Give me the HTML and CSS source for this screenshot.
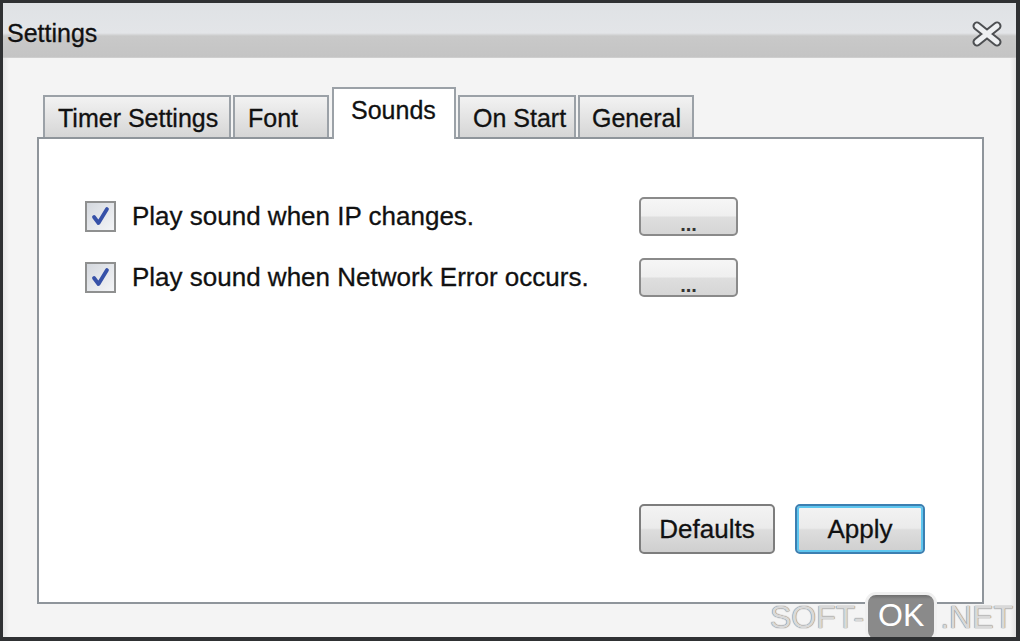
FILE: index.html
```html
<!DOCTYPE html>
<html>
<head>
<meta charset="utf-8">
<link rel="stylesheet" href="styles.css">
</head>
<body>
<div class="window">
  <div class="titlebar">
    <span class="title">Settings</span>
    <svg class="close" width="32" height="26" viewBox="0 0 32 26">
      <path d="M6 5 L26 21 M26 5 L6 21" stroke="#4d4f52" stroke-width="9" stroke-linecap="round"/>
      <path d="M6 5 L26 21 M26 5 L6 21" stroke="#eef0f2" stroke-width="5" stroke-linecap="round"/>
    </svg>
  </div>
  <div class="content">
    <div class="tabs">
      <div class="tab t1">Timer Settings</div>
      <div class="tab t2">Font</div>
      <div class="tab t3 active">Sounds</div>
      <div class="tab t4">On Start</div>
      <div class="tab t5">General</div>
    </div>
    <div class="panel">
      <div class="row">
        <span class="check"><svg width="27" height="27" viewBox="0 0 27 27"><path d="M7 14 L11.5 20 L20 6" fill="none" stroke="#3651a8" stroke-width="3.8" stroke-linejoin="round" stroke-linecap="round"/></svg></span>
        <span class="label">Play sound when IP changes.</span>
        <button class="dots">...</button>
      </div>
      <div class="row">
        <span class="check"><svg width="27" height="27" viewBox="0 0 27 27"><path d="M7 14 L11.5 20 L20 6" fill="none" stroke="#3651a8" stroke-width="3.8" stroke-linejoin="round" stroke-linecap="round"/></svg></span>
        <span class="label">Play sound when Network Error occurs.</span>
        <button class="dots">...</button>
      </div>
      <div class="footer">
        <button class="btn defaults">Defaults</button>
        <button class="btn apply">Apply</button>
      </div>
    </div>
  </div>
  <div class="watermark"><span class="wm-text">SOFT-</span><span class="wm-ok">OK</span><span class="wm-text">.NET</span></div>
</div>
</body>
</html>
```
FILE: styles.css
```css
html, body {
  margin: 0;
  padding: 0;
  background: #c8c8c8;
}
body {
  font-family: "Liberation Sans", Arial, sans-serif;
  color: #111;
}
.window {
  position: relative;
  box-sizing: border-box;
  width: 1020px;
  height: 641px;
  border: 3px solid #2f3133;
  border-right-width: 4px;
  border-bottom-width: 4px;
  background: #f1f1f1;
  display: flex;
  flex-direction: column;
  overflow: hidden;
}
.titlebar {
  height: 55px;
  flex: none;
  display: flex;
  align-items: center;
  justify-content: space-between;
  padding: 0 13px 0 4px;
  background: linear-gradient(#dfe2e5 0, #e3e5e8 30px, #c9c9c9 33px, #c4c4c4 54px, #d8d8d8 55px);
}
.title {
  font-size: 25px;
  color: #111;
  margin-top: 6px;
  -webkit-text-stroke: 0.3px #111;
}
.close {
  margin-top: 7px;
}
.content {
  flex: 1;
  display: flex;
  flex-direction: column;
  padding: 29px 32px 33px 34px;
  background: linear-gradient(90deg, #e6e6e6 0, #f4f4f4 6px, #f4f4f4 calc(100% - 6px), #e2e2e2 100%);
}
.tabs {
  height: 50px;
  flex: none;
  display: flex;
  align-items: flex-end;
  padding-left: 6px;
}
.tab {
  box-sizing: border-box;
  height: 42px;
  border: 2px solid #9ba1a7;
  border-bottom: none;
  background: linear-gradient(#f2f2f2, #e4e4e4 50%, #d6d6d6);
  font-size: 25px;
  display: flex;
  align-items: center;
  padding-left: 13px;
  padding-top: 2px;
  margin-right: 2px;
  -webkit-text-stroke: 0.3px #111;
}
.t1 { width: 188px; }
.t2 { width: 96px; margin-right: 3px; }
.t3 { width: 124px; }
.t4 { width: 118px; }
.t5 { width: 116px; padding-left: 12px; }
.tab.active {
  height: 52px;
  margin-bottom: -2px;
  position: relative;
  z-index: 1;
  background: #fff;
  padding-left: 17px;
  padding-top: 0;
  padding-bottom: 8px;
}
.panel {
  flex: 1;
  box-sizing: border-box;
  border: 2px solid #8f959b;
  background: #fff;
  display: flex;
  flex-direction: column;
  padding: 58px 0 48px 46px;
}
.row {
  display: flex;
  align-items: center;
  height: 39px;
  margin-bottom: 22px;
}
.check {
  box-sizing: border-box;
  width: 31px;
  height: 31px;
  border: 2px solid #8f9090;
  background: linear-gradient(135deg, #d4d8de, #f4f5f7);
  display: flex;
  align-items: center;
  justify-content: center;
  flex: none;
}
.label {
  font-size: 26px;
  margin-left: 16px;
  width: 507px;
  flex: none;
  white-space: nowrap;
  -webkit-text-stroke: 0.3px #111;
}
.dots {
  box-sizing: border-box;
  width: 99px;
  height: 39px;
  border: 2px solid #8a8a8a;
  border-radius: 5px;
  background: linear-gradient(#f6f6f6 0, #efefef 48%, #dedede 52%, #d6d6d6 100%);
  font-family: "Liberation Sans", Arial, sans-serif;
  font-size: 20px;
  font-weight: bold;
  color: #333;
  padding: 14px 0 0;
  line-height: 20px;
}
.footer {
  margin-top: auto;
  display: flex;
  justify-content: flex-end;
  gap: 20px;
  padding-right: 57px;
}
.btn {
  box-sizing: border-box;
  height: 50px;
  border: 2px solid #7d7d7d;
  border-radius: 5px;
  background: linear-gradient(#f3f3f3 0, #ebebeb 48%, #dddddd 52%, #cfcfcf 100%);
  font-family: "Liberation Sans", Arial, sans-serif;
  font-size: 26px;
  color: #111;
  padding: 0;
  -webkit-text-stroke: 0.3px #111;
}
.defaults { width: 136px; }
.apply {
  width: 130px;
  border-color: #3c7fb1;
  box-shadow: inset 0 0 0 2px #5ec6ef;
}
.watermark {
  position: absolute;
  left: 767px;
  top: 589px;
  display: flex;
  align-items: center;
  font-family: "Liberation Sans", Arial, sans-serif;
  font-size: 32px;
}
.wm-text {
  color: #d9d9d9;
  text-shadow: 0 0 1px #7a7a7a, 0 0 1px #7a7a7a;
}
.wm-ok {
  box-sizing: border-box;
  height: 50px;
  width: 72px;
  margin: 0 3px 0 1px;
  border: 3px solid #f0f0f0;
  border-radius: 11px;
  background: linear-gradient(#6e6e6e 0, #8a8a8a 4px, #8a8a8a 100%);
  color: #fff;
  display: flex;
  align-items: center;
  justify-content: center;
  padding-bottom: 4px;
}
```
